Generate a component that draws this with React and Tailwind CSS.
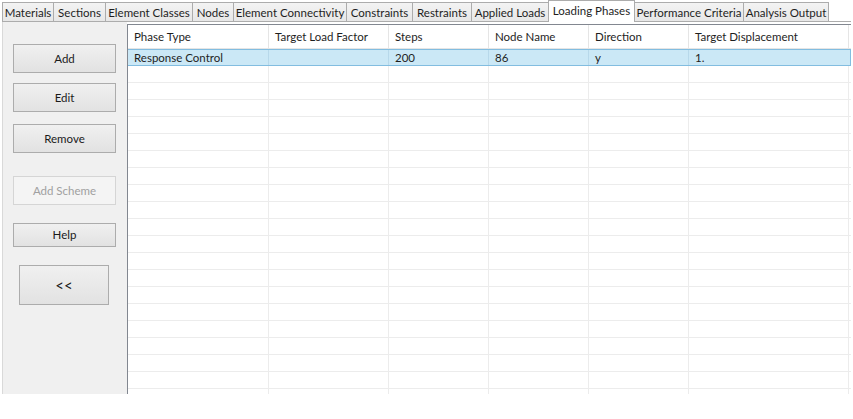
import React from "react";

const tabs = [
  ["Materials", 52],
  ["Sections", 53],
  ["Element Classes", 88],
  ["Nodes", 42],
  ["Element Connectivity", 114],
  ["Constraints", 67],
  ["Restraints", 60],
  ["Applied Loads", 78],
  ["Loading Phases", 87],
  ["Performance Criteria", 110],
  ["Analysis Output", 86],
];

const cols = [
  ["Phase Type", 141],
  ["Target Load Factor", 120],
  ["Steps", 100],
  ["Node Name", 100],
  ["Direction", 100],
  ["Target Displacement", 160],
];

const row1 = ["Response Control", "", "200", "86", "y", "1."];

function Btn({ children, className = "", disabled = false }) {
  return (
    <div
      className={
        "flex items-center justify-center border whitespace-nowrap " +
        (disabled
          ? "border-[#d5d5d5] bg-[#f4f4f4] text-[#a0a0a0] "
          : "border-[#acacac] bg-linear-to-b from-[#f0f0f0] to-[#e2e2e2] text-[#1a1a1a] ") +
        className
      }
    >
      {children}
    </div>
  );
}

export default function App() {
  const emptyRows = Array.from({ length: 20 });
  return (
    <div
      className="w-[853px] h-[419px] bg-white overflow-hidden text-[11.5px] text-[#1e1e1e]"
      style={{ fontFamily: 'Lato, "Noto Sans", sans-serif' }}
    >
      {/* Tab strip */}
      <div className="flex items-end h-[21px] pl-[2px]">
        {tabs.map(([t, w], i) =>
          t === "Loading Phases" ? (
            <div
              key={t}
              style={{ width: w }}
              className="h-[22px] relative z-10 -mb-px -ml-px bg-white border border-b-0 border-[#acacac] flex items-start justify-center pt-[2px] leading-[15px] whitespace-nowrap"
            >
              {t}
            </div>
          ) : (
            <div
              key={t}
              style={{ width: w }}
              className={
                "h-[19px] bg-linear-to-b from-[#f3f3f3] to-[#e7e7e7] border border-b-0 border-[#acacac] flex items-center justify-center leading-[15px] whitespace-nowrap " +
                (i > 0 ? "-ml-px" : "")
              }
            >
              {t}
            </div>
          )
        )}
      </div>

      {/* Content */}
      <div className="ml-[2px] w-[849px] h-[373px] border-t border-[#acacac] flex">
        {/* Left panel */}
        <div className="w-[125px] h-[372px] bg-[#f0f0f0] border-l border-[#d9d9d9] flex flex-col pl-[10px]">
          <Btn className="mt-[22px] w-[103px] h-[29px]">Add</Btn>
          <Btn className="mt-[10px] w-[103px] h-[29px]">Edit</Btn>
          <Btn className="mt-[12px] w-[103px] h-[29px]">Remove</Btn>
          <Btn disabled className="mt-[23px] w-[103px] h-[29px]">
            Add Scheme
          </Btn>
          <Btn className="mt-[18px] w-[103px] h-[24px]">Help</Btn>
          <Btn className="mt-[18px] ml-[6px] w-[90px] h-[40px] text-[15px]">
            &lt;&lt;
          </Btn>
        </div>

        {/* Table */}
        <div className="mt-[2px] w-[724px] h-[370px] border-l border-t border-[#828790] overflow-hidden bg-white">
          <div className="flex h-[24px] border-b border-[#e5e5e5]">
            {cols.map(([c, w]) => (
              <div
                key={c}
                style={{ width: w }}
                className="shrink-0 flex items-center pl-[6px] border-r border-[#e5e5e5] whitespace-nowrap"
              >
                {c}
              </div>
            ))}
          </div>
          <div className="flex h-[17px] bg-[#cbe8f6] border border-[#82bde0] -ml-px">
            {cols.map(([c, w], i) => (
              <div
                key={c}
                style={{ width: w }}
                className={
                  "shrink-0 flex items-center pl-[6px] leading-none whitespace-nowrap " +
                  (i < cols.length - 1 ? "border-r border-[#b7d8ea]" : "")
                }
              >
                {row1[i]}
              </div>
            ))}
          </div>
          {emptyRows.map((_, r) => (
            <div key={r} className="flex h-[17px] border-b border-[#ececec]">
              {cols.map(([c, w]) => (
                <div
                  key={c}
                  style={{ width: w }}
                  className="shrink-0 border-r border-[#ececec]"
                />
              ))}
            </div>
          ))}
        </div>
      </div>
    </div>
  );
}
